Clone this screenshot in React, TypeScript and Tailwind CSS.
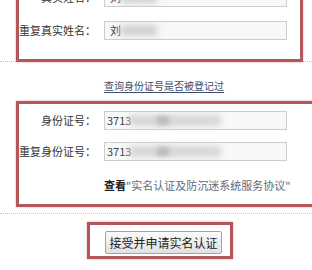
const FONT = "font-['Noto_Sans_CJK_SC','Noto_Sans',sans-serif]";

function Field({ label, value, pad, blob }: { label: string; value: string; pad: string; blob: "name" | "id" }) {
  return (
    <div className="flex items-center">
      <span className="w-[77px] shrink-0 whitespace-nowrap text-right text-[11px] leading-[19px] text-[#333]">{label}</span>
      <div
        className={`relative ml-[8px] flex h-[19px] w-[183px] items-center overflow-hidden border border-[#cdcdcd] bg-[#f8f8f8] text-[11px] text-[#444] ${pad}`}
      >
        <span>{value}</span>
        {blob === "name" ? (
          <span className="absolute left-[16px] top-[3px] h-[11px] w-[36px] bg-[#d0d0d0] blur-[3px]" />
        ) : (
          <>
            <span className="absolute left-[24px] top-[3px] h-[11px] w-[92px] bg-[#d6d6d6] blur-[3px]" />
            <span className="absolute left-[52px] top-[4px] h-[9px] w-[12px] bg-[#bcbcbc] blur-[2px]" />
          </>
        )}
      </div>
    </div>
  );
}

export default function App() {
  return (
    <div className={`relative h-[270px] w-[312px] overflow-hidden bg-white ${FONT}`}>
      <div className="relative ml-[16px] mt-[-40px] flex w-[287px] flex-col gap-[14px] border-[3px] border-[#b4575b] pb-[19px] pt-[25px] shadow-[0_0_2px_#dba6a8]">
        <Field label="真实姓名：" value="刘" pad="pl-[5px]" blob="name" />
        <Field label="重复真实姓名：" value="刘" pad="pl-[5px]" blob="name" />
      </div>
      <div className="-mt-[1px] border-t border-dotted border-[#c4c4c4]" />

      <div className="mt-[17px] pl-[104px] text-[10px] leading-[14px]">
        <span className="text-[#3c4e6c] underline underline-offset-2">查询身份证号是否被登记过</span>
      </div>

      <div className="relative ml-[16px] mt-[8px] w-[310px] border-[3px] border-[#b4575b] pb-[12px] pt-[7px] shadow-[0_0_2px_#dba6a8]">
        <div className="flex flex-col gap-[12px]">
          <Field label="身份证号：" value="3713" pad="pl-[2px]" blob="id" />
          <Field label="重复身份证号：" value="3713" pad="pl-[2px]" blob="id" />
        </div>
        <div className="mt-[17px] whitespace-nowrap pl-[85px] text-[11px] leading-[14px]">
          <span className="font-bold text-[#222]">查看</span>
          <span className="text-[#5b6b82]">"实名认证及防沉迷系统服务协议"</span>
        </div>
      </div>
      <div className="mt-[6px] border-t border-dotted border-[#c4c4c4]" />

      <div className="ml-[87px] mt-[8px] w-[146px] border-[3px] border-[#b4575b] pb-[2px] pl-[15px] pt-[6px] shadow-[0_0_2px_#dba6a8]">
        <button className="flex h-[23px] w-[117px] items-center justify-center rounded-[2px] border border-[#a3a3a3] bg-gradient-to-b from-[#fbfbfb] to-[#e1e1e1] text-[12px] text-[#222]">
          接受并申请实名认证
        </button>
      </div>
    </div>
  );
}
